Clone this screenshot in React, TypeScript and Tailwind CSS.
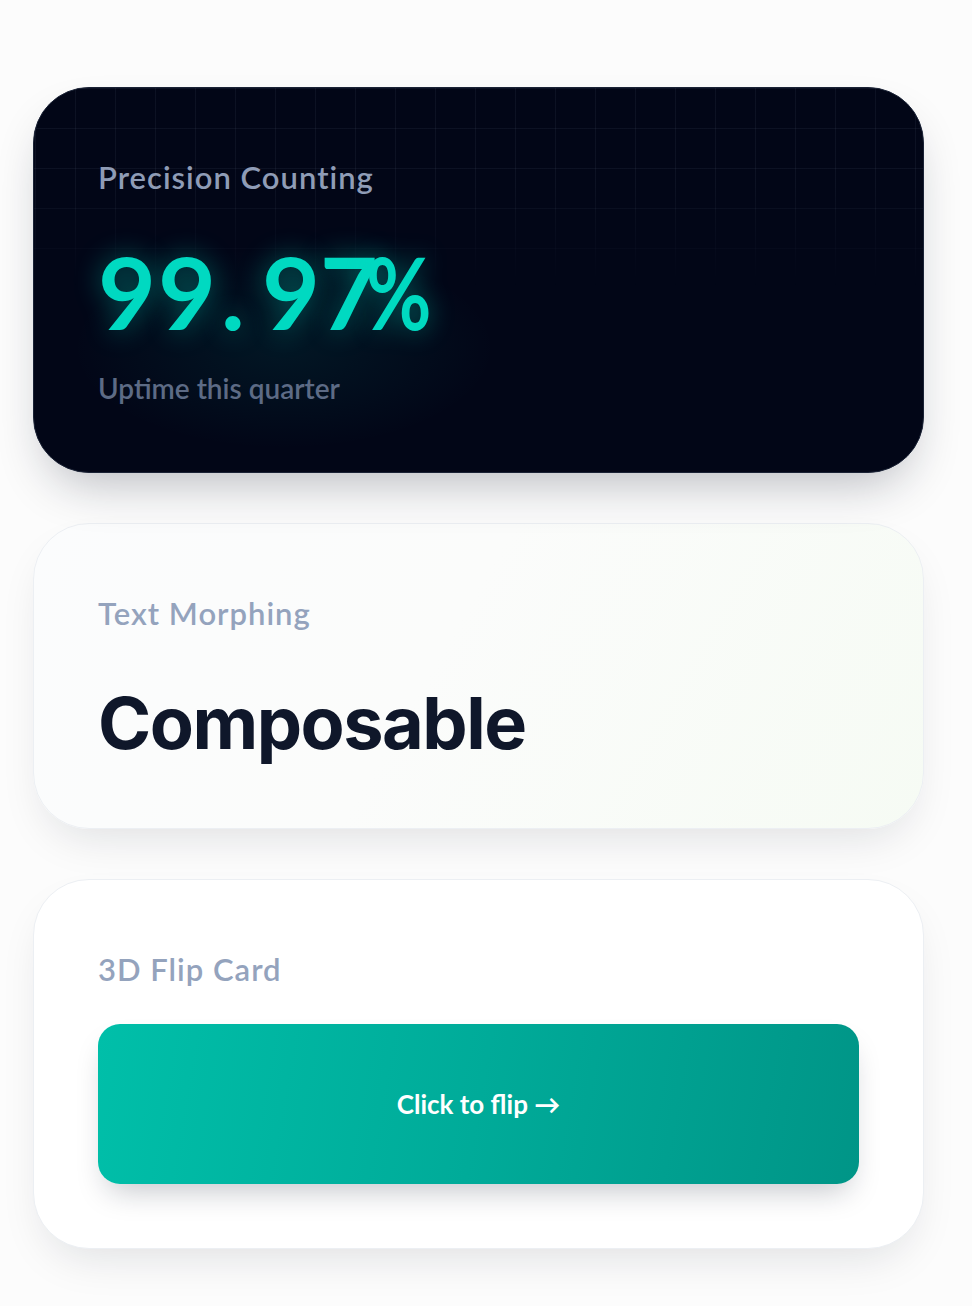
import React from 'react';

const labelFont = { fontFamily: 'Lato, "Noto Sans", sans-serif' };

function Label({ children }: { children: React.ReactNode }) {
  return (
    <div className="text-[31px] font-semibold leading-[50px] tracking-[1px] text-[#94a3bd]" style={labelFont}>
      {children}
    </div>
  );
}

function CounterCard() {
  return (
    <div className="relative overflow-hidden rounded-[56px] border border-[#1a2235] bg-[#020617] px-16 pt-16 pb-[66px] shadow-[0_24px_50px_-16px_rgba(15,23,42,0.3)]">
      {/* grid backdrop */}
      <div className="pointer-events-none absolute inset-0 bg-[linear-gradient(to_right,rgba(148,163,184,0.08)_1px,transparent_1px),linear-gradient(to_bottom,rgba(148,163,184,0.08)_1px,transparent_1px)] bg-[size:40px_40px] bg-[position:1px_0px] [mask-image:linear-gradient(to_bottom,black_25%,transparent_52%)]" />
      {/* glow */}
      <div className="pointer-events-none absolute left-[20px] top-[150px] h-[220px] w-[460px] bg-[radial-gradient(ellipse_at_center,rgba(0,217,193,0.08),transparent_65%)]" />
      <div className="relative" style={labelFont}>
        <div className="text-[31px] font-semibold leading-[50px] tracking-[1px] text-[#8f9cb6]">Precision Counting</div>
        <div className="mt-[39px] flex h-[100px] items-center text-[100px] font-bold leading-none text-[#00d9c1] [text-shadow:0_0_28px_rgba(0,217,193,0.45)]">
          <span className="inline-block tracking-[2px]">99</span>
          <span className="inline-block w-[44px] pl-[3px]">.</span>
          <span className="inline-block">9</span>
          <span className="inline-block tracking-[-12px]">
            7<span className="inline-block origin-left scale-x-[0.8]">%</span>
          </span>
        </div>
        <div className="mt-[29px] text-[28px] font-semibold leading-9 text-[#5d6b85]">Uptime this quarter</div>
      </div>
    </div>
  );
}

function MorphCard() {
  return (
    <div className="rounded-[56px] border border-[#eceff3] bg-[linear-gradient(120deg,#fbfcfd_0%,#fbfcfb_45%,#f6fbf4_100%)] px-16 pt-16 pb-[69px] shadow-[0_20px_45px_-14px_rgba(15,23,42,0.13)]">
      <Label>Text Morphing</Label>
      <div
        className="mt-[49px] text-[72px] font-bold leading-[72px] tracking-[-1.5px] text-[#0f172a]"
        style={{ fontFamily: 'Inter, "Noto Sans", sans-serif' }}
      >
        Composable
      </div>
    </div>
  );
}

function FlipCard() {
  return (
    <div className="rounded-[56px] border border-[#eceff3] bg-white p-16 shadow-[0_20px_45px_-14px_rgba(15,23,42,0.13)]">
      <Label>3D Flip Card</Label>
      <button
        className="mt-[30px] flex h-[160px] w-full items-center justify-center rounded-[22px] bg-[linear-gradient(100deg,#00bfa9_0%,#00ab99_50%,#009587_100%)] text-[26px] font-bold text-white shadow-[0_16px_30px_-10px_rgba(15,23,42,0.25)]"
        style={labelFont}
      >
        Click to flip →
      </button>
    </div>
  );
}

export default function App() {
  return (
    <div className="min-h-screen bg-[#fcfcfc] pt-[87px] pb-[56px]">
      <div className="ml-[33px] flex w-[891px] flex-col gap-[50px]">
        <CounterCard />
        <MorphCard />
        <FlipCard />
      </div>
    </div>
  );
}
